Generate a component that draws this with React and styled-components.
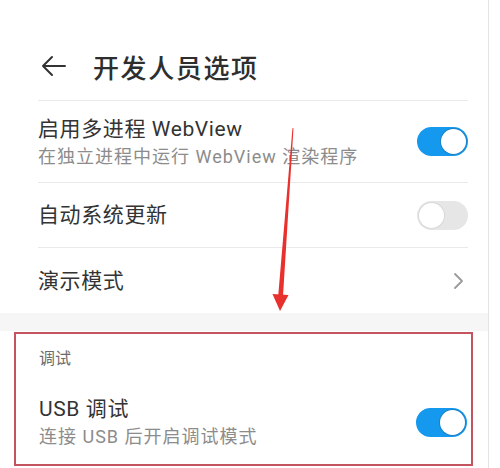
import React from "react";
import styled, { createGlobalStyle } from "styled-components";

const GlobalStyle = createGlobalStyle`
  html, body {
    margin: 0;
    padding: 0;
    background: #ffffff;
  }
  body {
    font-family: Roboto, "Noto Sans CJK SC", sans-serif;
    color: #333;
  }
`;

const Page = styled.div`
  position: relative;
  width: 500px;
  height: 468px;
  overflow: hidden;
  background: #fff;
`;

const Screen = styled.div`
  width: 489px;
  height: 100%;
  padding-top: 32px;
  box-sizing: border-box;
  border-right: 1px solid #e4e4e4;
  display: flex;
  flex-direction: column;
`;

const Header = styled.div`
  height: 68px;
  display: flex;
  align-items: center;
  padding-left: 41px;
  gap: 26px;
  box-sizing: border-box;
`;

const Title = styled.h1`
  margin: 0;
  font-size: 26px;
  font-weight: 500;
  color: #2e2e2e;
  letter-spacing: 1.6px;
`;

const List = styled.div`
  padding: 0 20px 0 38px;
  display: flex;
  flex-direction: column;
`;

const Row = styled.div`
  height: ${(p) => p.$h}px;
  display: flex;
  align-items: center;
  justify-content: space-between;
  border-top: 1px solid #e9e9e9;
  box-sizing: border-box;
`;

const Texts = styled.div`
  display: flex;
  flex-direction: column;
  gap: 6px;
`;

const RowTitle = styled.div`
  font-size: 21px;
  line-height: 24px;
  color: #333;
  letter-spacing: 0.6px;
`;

const RowSub = styled.div`
  font-size: 18px;
  line-height: 20px;
  color: #8c8c8c;
  letter-spacing: 1px;
`;

const Switch = styled.div`
  width: 51px;
  height: 29px;
  border-radius: 15px;
  background: ${(p) => (p.$on ? "#1499ee" : "#e6e6e6")};
  display: flex;
  align-items: center;
  justify-content: ${(p) => (p.$on ? "flex-end" : "flex-start")};
  padding: 0 2px;
  box-sizing: border-box;
  flex-shrink: 0;
`;

const Knob = styled.div`
  width: 25px;
  height: 25px;
  border-radius: 50%;
  background: #fff;
  box-shadow: 0 0 0 1px ${(p) => (p.$on ? "rgba(40,90,130,0.35)" : "rgba(0,0,0,0.06)")};
`;

const Band = styled.div`
  height: 18px;
  background: #f6f6f6;
`;

const Highlight = styled.div`
  margin: 1px 15px 0 14px;
  border: 2px solid #c45560;
  height: 134px;
  box-sizing: border-box;
  padding: 0 4px 0 23px;
  display: flex;
  flex-direction: column;
`;

const Category = styled.div`
  height: 38px;
  display: flex;
  align-items: center;
  font-size: 16px;
  color: #6c6c6c;
  padding-top: 4px;
`;

const SectionRow = styled.div`
  flex: 1;
  display: flex;
  align-items: center;
  justify-content: space-between;
  padding-top: 4px;
`;

const Overlay = styled.svg`
  position: absolute;
  left: 0;
  top: 0;
  pointer-events: none;
`;

const Toggle = ({ on }) => (
  <Switch $on={on}>
    <Knob $on={on} />
  </Switch>
);

const BackArrow = () => (
  <svg width="26" height="22" viewBox="0 0 26 22" fill="none">
    <path d="M24 11H2M11 2L2 11L11 20" stroke="#333" strokeWidth="2" strokeLinecap="round" strokeLinejoin="round" />
  </svg>
);

const Chevron = () => (
  <svg width="12" height="18" viewBox="0 0 12 18" fill="none" style={{ marginRight: 4 }}>
    <path d="M3 2L10 9L3 16" stroke="#9a9a9a" strokeWidth="1.8" strokeLinecap="round" strokeLinejoin="round" />
  </svg>
);

export default function App() {
  return (
    <>
      <GlobalStyle />
      <Page>
        <Screen>
          <Header>
            <BackArrow />
            <Title>开发人员选项</Title>
          </Header>
          <List>
            <Row $h={82}>
              <Texts>
                <RowTitle>启用多进程 WebView</RowTitle>
                <RowSub>在独立进程中运行 WebView 渲染程序</RowSub>
              </Texts>
              <Toggle on />
            </Row>
            <Row $h={65}>
              <RowTitle>自动系统更新</RowTitle>
              <Toggle on={false} />
            </Row>
            <Row $h={66}>
              <RowTitle>演示模式</RowTitle>
              <Chevron />
            </Row>
          </List>
          <Band />
          <Highlight>
            <Category>调试</Category>
            <SectionRow>
              <Texts>
                <RowTitle>USB 调试</RowTitle>
                <RowSub>连接 USB 后开启调试模式</RowSub>
              </Texts>
              <Toggle on />
            </SectionRow>
          </Highlight>
        </Screen>
        <Overlay width="500" height="468" viewBox="0 0 500 468">
          <path d="M292.5 128 L293.5 128.2 L283 296 L278.2 296 Z" fill="#e8302c" />
          <path d="M272.5 294 L288.5 295 L280 311 Z" fill="#e8302c" />
        </Overlay>
      </Page>
    </>
  );
}
